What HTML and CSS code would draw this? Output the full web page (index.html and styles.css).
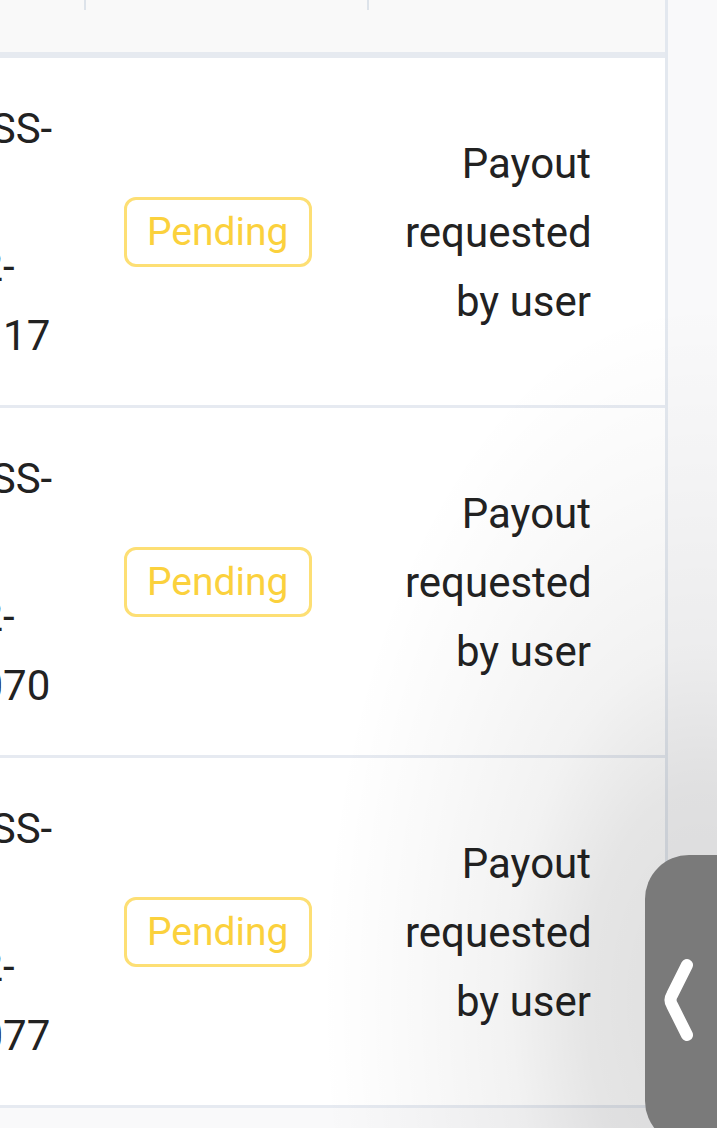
FILE: index.html
```html
<!DOCTYPE html>
<html lang="en">
<head>
    <meta charset="UTF-8">
    <meta name="viewport" content="width=device-width, initial-scale=1.0">
    <title>Payouts</title>
    <link rel="stylesheet" href="styles.css">
</head>
<body>
    <div class="screen">
        <div class="table-card">
            <table class="payout-table">
                <colgroup>
                    <col class="col-id">
                    <col class="col-status">
                    <col class="col-remark">
                </colgroup>
                <thead>
                    <tr>
                        <th>Reference</th>
                        <th>Status</th>
                        <th class="remark">Remark</th>
                    </tr>
                </thead>
                <tbody>
                    <tr>
                        <td class="txn-id">ACCESS-<br>2024<br>20242-<br>2025117</td>
                        <td class="status"><span class="status-tag">Pending</span></td>
                        <td class="remark">Payout requested by user</td>
                    </tr>
                    <tr>
                        <td class="txn-id">ACCESS-<br>2024<br>20242-<br>2025070</td>
                        <td class="status"><span class="status-tag">Pending</span></td>
                        <td class="remark">Payout requested by user</td>
                    </tr>
                    <tr>
                        <td class="txn-id">ACCESS-<br>2024<br>20242-<br>2025077</td>
                        <td class="status"><span class="status-tag">Pending</span></td>
                        <td class="remark">Payout requested by user</td>
                    </tr>
                </tbody>
            </table>
        </div>
        <div class="edge-shade"></div>
        <div class="back-tab">
            <svg width="72" height="290" viewBox="0 0 72 290">
                <path d="M42 110 L27 140 Q24 145 27 150 L42 180" fill="none" stroke="#fff" stroke-width="12" stroke-linecap="round" stroke-linejoin="round"/>
            </svg>
        </div>
    </div>
</body>
</html>
```

FILE: styles.css
```css
body {
    margin: 0;
    background-color: #f9f9fa;
    font-family: Roboto, "Noto Sans", sans-serif;
    font-size: 42px;
    color: #222;
}
.screen {
    position: relative;
    display: flex;
    height: 1128px;
    overflow: hidden;
}
.table-card {
    flex: none;
    width: 665px;
    height: 100%;
    overflow: hidden;
    border-right: 3px solid #e3e8ef;
}
.payout-table {
    border-collapse: separate;
    border-spacing: 0;
    table-layout: fixed;
    width: 816px;
    margin: -109px 0 0 -151px;
}
.col-id {
    width: 237px;
}
.col-status {
    width: 283px;
}
.col-remark {
    width: 296px;
}
th {
    position: relative;
    padding: 46px 36px;
    line-height: 69px;
    font-weight: 500;
    text-align: left;
    white-space: nowrap;
    background-color: #f9f9f9;
    border-bottom: 6px solid #e6eaf0;
}
th:not(:last-child)::before {
    content: "";
    position: absolute;
    right: -1px;
    top: 50%;
    width: 3px;
    height: 76px;
    transform: translateY(-50%);
    background-color: #dde3ea;
}
td {
    padding: 36px 20px 35px 36px;
    line-height: 69px;
    vertical-align: middle;
    background-color: #fff;
    border-bottom: 3px solid #e6eaf1;
}
.txn-id {
    white-space: nowrap;
}
td.status {
    padding-left: 38px;
}
.remark {
    text-align: right;
    padding-right: 74px;
}
.status-tag {
    display: inline-block;
    vertical-align: middle;
    margin-bottom: 2px;
    padding: 8px 20px;
    line-height: 48px;
    font-size: 39px;
    color: #fbd13d;
    border: 3px solid #fddf74;
    border-radius: 12px;
}
.edge-shade {
    position: absolute;
    inset: 0;
    pointer-events: none;
    background: radial-gradient(380px 700px at 700px 1000px, rgba(0, 0, 0, 0.13) 0%, rgba(0, 0, 0, 0.1) 30%, rgba(0, 0, 0, 0.05) 50%, rgba(0, 0, 0, 0.025) 75%, rgba(0, 0, 0, 0) 100%);
}
.back-tab {
    position: absolute;
    left: 645px;
    top: 855px;
    width: 90px;
    height: 290px;
    background-color: #7a7a7a;
    border-radius: 44px 0 0 44px;
}
.back-tab svg {
    display: block;
}
```
